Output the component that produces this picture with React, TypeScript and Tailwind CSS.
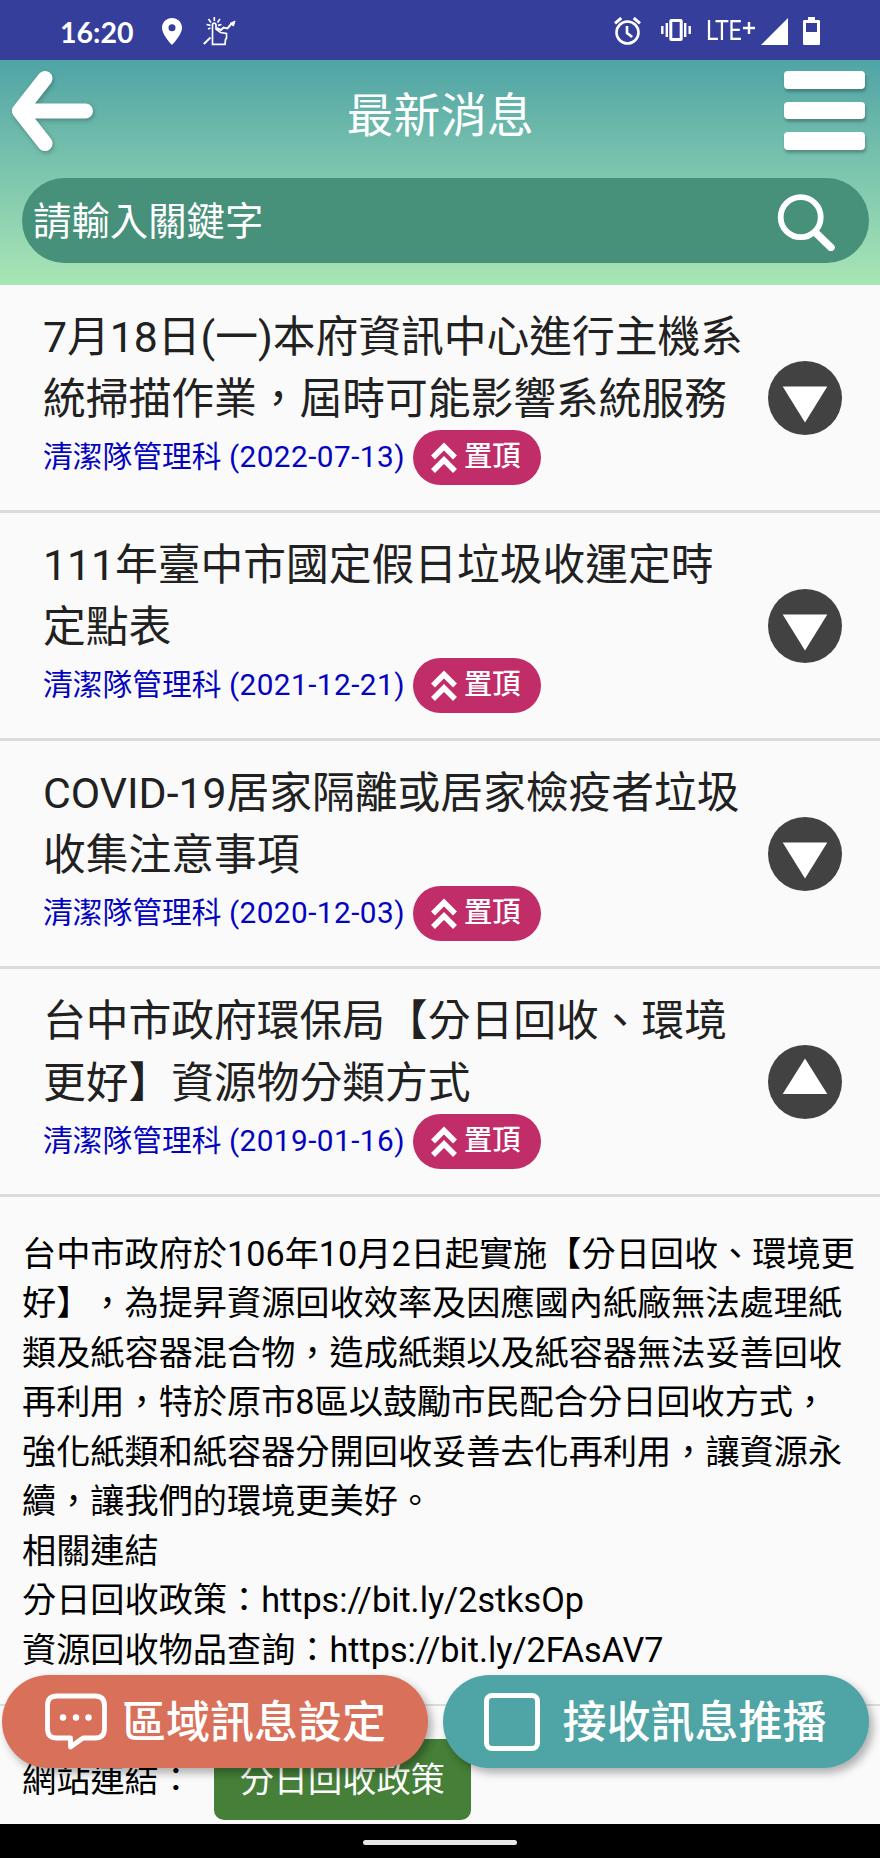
import type { ReactNode } from 'react';

interface NewsItem {
	id: number;
	title: string[];
	unit: string;
	date: string;
	open: boolean;
}

const NEWS: NewsItem[] = [
	{
		id: 1,
		title: ['7月18日(一)本府資訊中心進行主機系', '統掃描作業，屆時可能影響系統服務'],
		unit: '清潔隊管理科',
		date: '2022-07-13',
		open: false,
	},
	{
		id: 2,
		title: ['111年臺中市國定假日垃圾收運定時', '定點表'],
		unit: '清潔隊管理科',
		date: '2021-12-21',
		open: false,
	},
	{
		id: 3,
		title: ['COVID-19居家隔離或居家檢疫者垃圾', '收集注意事項'],
		unit: '清潔隊管理科',
		date: '2020-12-03',
		open: false,
	},
	{
		id: 4,
		title: ['台中市政府環保局【分日回收、環境', '更好】資源物分類方式'],
		unit: '清潔隊管理科',
		date: '2019-01-16',
		open: true,
	},
];

const BODY = [
	'台中市政府於106年10月2日起實施【分日回收、環境更',
	'好】，為提昇資源回收效率及因應國內紙廠無法處理紙',
	'類及紙容器混合物，造成紙類以及紙容器無法妥善回收',
	'再利用，特於原市8區以鼓勵市民配合分日回收方式，',
	'強化紙類和紙容器分開回收妥善去化再利用，讓資源永',
	'續，讓我們的環境更美好。',
	'相關連結',
	'分日回收政策：https://bit.ly/2stksOp',
	'資源回收物品查詢：https://bit.ly/2FAsAV7',
];


function StatusBar() {
	return (
		<div className="flex h-[60px] shrink-0 items-center bg-[#353e9a] pr-[60px] pl-[60px] text-white">
			<span className="mt-[5px] w-[102px] font-[Lato,sans-serif] text-[28.500px] leading-none font-bold">16:20</span>

			{/* Location pin */}
			<svg className="mt-0.5 h-[27px] w-5" viewBox="0 0 20 27" fill="currentColor">
				<path fillRule="evenodd" d="M10 0C4.400 0 0 4.300 0 9.800 0 17 10 27 10 27s10-10 10-17.200C20 4.300 15.600 0 10 0Zm0 6.300a3.500 3.500 0 1 1 0 7 3.500 3.500 0 0 1 0-7Z" />
			</svg>

			{/* Tapping hand with trend line */}
			<svg className="mt-0.5 ml-[21px] h-[29px] w-[33px]" viewBox="0 0 33 29" fill="none" stroke="currentColor" strokeWidth="1.700">
				<path d="M9.500 20v7.300H22l.5-5 1-1v-4.800l-6-1L13 12V8c0-2.500-3.500-2.500-3.500 0v14" />
				<path d="M.8 27 7.500 20.500M13.500 11l4.500 2 2.500-2.500 4 1L29 6" strokeWidth="2" />
				<path d="M27 6.500 32 4l-1.500 5Z" fill="currentColor" strokeWidth="1" />
				<path d="M11.300 0v4M5.500 2l2.500 3.500M17 2l-2.500 3.500M3.500 7.500l4 .8M18.500 7.500l-3.500.8M5 12l2.500-1" />
			</svg>

			{/* Alarm clock */}
			<svg className="mt-0.5 ml-auto h-[28px] w-[27px]" viewBox="0 0 27 28" fill="none" stroke="currentColor" strokeWidth="2.600">
				<circle cx="13.500" cy="15.500" r="11" />
				<path d="M13 9v7l5.200 4" />
				<path d="M1 6.300 7.300 1M26 6.300 19.700 1" strokeWidth="3" />
			</svg>

			{/* Vibrate */}
			<svg className="ml-5 h-[22px] w-[30px]" viewBox="0 0 30 22" fill="none" stroke="currentColor" strokeWidth="3">
				<rect x="9.800" y="1.500" width="10.400" height="19" rx="0.500" />
				<path d="M5.800 4v14M24.200 4v14M1.300 7v8M28.700 7v8" strokeWidth="2.400" />
			</svg>

			<span className="ml-[15px] flex w-[54px] items-center font-[Roboto,sans-serif]">
				<span className="mt-[3px] w-[36px] origin-left scale-x-[0.86] text-[27px] leading-none tracking-[-0.5px]">LTE</span>
				<svg className="mb-1 ml-px h-3 w-3" viewBox="0 0 12 12" stroke="currentColor" strokeWidth="2.400">
					<path d="M6 0v12M0 6h12" />
				</svg>
			</span>

			{/* Signal + battery */}
			<svg className="mt-0.5 ml-px h-[27px] w-[27px]" viewBox="0 0 27 27" fill="currentColor">
				<path d="M27 0v27H0Z" />
			</svg>
			<svg className="mt-0.5 ml-[15px] h-[28px] w-[17px]" viewBox="0 0 17 28" fill="currentColor">
				<path fillRule="evenodd" d="M5 0h7v3h3.500c1 0 1.500.5 1.500 1.500v22c0 1-.5 1.500-1.500 1.500h-14C.5 28 0 27.500 0 26.500v-22C0 3.500.5 3 1.500 3H5V0ZM3 6v9h11V6H3Z" />
			</svg>
		</div>
	);
}


function Header() {
	return (
		<header className="h-[225px] shrink-0 bg-linear-to-b from-[#4fa4a5] to-[#a9e6b5] text-white">
			<div className="flex h-[118px] items-start justify-between pt-[11px] pr-[14.500px] pl-[10px]">
				<svg
					className="h-[84px] w-[86px] drop-shadow-[1px_2px_2px_rgba(0,0,0,0.25)]"
					viewBox="0 0 86 84"
					fill="none"
					stroke="currentColor"
					strokeWidth="15"
					strokeLinecap="round"
					strokeLinejoin="round">
					<path d="M35 7.500 9.500 40 35 72.500M14 40h61.500" />
				</svg>
				<h1 className="pt-[7px] text-[46.700px] leading-[76px]">最新消息</h1>
				<div className="flex flex-col gap-[13px]">
					<div className="h-[17.500px] w-[81px] rounded-[4px] bg-white shadow-[1px_3px_3px_rgba(0,0,0,0.25)]" />
					<div className="h-[17.500px] w-[81px] rounded-[4px] bg-white shadow-[1px_3px_3px_rgba(0,0,0,0.25)]" />
					<div className="h-[17.500px] w-[81px] rounded-[4px] bg-white shadow-[1px_3px_3px_rgba(0,0,0,0.25)]" />
				</div>
			</div>
			<div className="mr-[11px] ml-[22px] flex h-[85px] items-center justify-between rounded-full bg-[#47917a] pr-[33px] pl-[11px]">
				<span className="pt-[2px] text-[38.400px] leading-[60px]">請輸入關鍵字</span>
				<svg className="mt-0.5 mr-px h-[58px] w-[58px]" viewBox="0 0 58 58" fill="none" stroke="currentColor" strokeLinecap="round">
					<circle cx="23.700" cy="24.200" r="20" strokeWidth="5.800" />
					<path d="M39 40 54 54.500" strokeWidth="7.500" />
				</svg>
			</div>
		</header>
	);
}


function PinnedBadge() {
	return (
		<span className="flex h-[54.500px] w-[128px] items-center rounded-full bg-[#c12d68] pl-[18px] text-white">
			<svg className="h-[31px] w-[26px]" viewBox="0 0 26 31" fill="none" stroke="currentColor" strokeWidth="5.500">
				<path d="M2 15.500 13 4.500l11 11M2 29 13 18l11 11" />
			</svg>
			<span className="ml-[7px] text-[28.300px] leading-10 font-medium">置頂</span>
		</span>
	);
}


// Round toggle: triangle points down when collapsed, up when expanded
function ToggleIcon({ open }: { open: boolean }) {
	return (
		<svg className="h-[74px] w-[74px] shrink-0" viewBox="0 0 74 74">
			<circle cx="37" cy="37" r="37" fill="#424242" />
			<path d={open ? 'M37 13.500 59.300 49H14.700Z' : 'M14.700 25.500h44.600L37 61.500Z'} fill="#fff" />
		</svg>
	);
}


function NewsRow({ item }: { item: NewsItem }) {
	return (
		<div className="flex h-[228px] shrink-0 items-center justify-between border-b-[3px] border-[#dcdcdc] pr-[38px] pl-[43px]">
			<div className="h-[181px]">
				<h2 className="text-[42.750px] leading-[61.500px] text-[#212121]">
					{item.title.map((line) => (
						<span key={line} className="block whitespace-nowrap">{line}</span>
					))}
				</h2>
				<div className="flex items-center gap-2">
					<span className="text-[29.750px] leading-[54px] whitespace-nowrap text-[#0404c0]">
						{item.unit} <span className="tracking-[0.440px]">({item.date})</span>
					</span>
					<PinnedBadge />
				</div>
			</div>
			<ToggleIcon open={item.open} />
		</div>
	);
}


function FloatingButton({ className, children }: { className: string; children: ReactNode }) {
	return (
		<button
			className={`flex h-[93px] w-[426px] items-center rounded-full text-[44px] leading-none text-white shadow-[4px_5px_8px_rgba(0,0,0,0.3)] ${className}`}>
			{children}
		</button>
	);
}


export default function App() {
	return (
		<div
			lang="zh-Hant-TW"
			className="relative flex h-[1858px] w-[880px] flex-col overflow-hidden bg-[#fafafa] font-[Roboto,'Noto_Sans_CJK_TC',sans-serif] [text-spacing-trim:space-all]">
			<StatusBar />
			<Header />

			<main className="flex flex-1 flex-col overflow-hidden">
				{NEWS.map((item) => (
					<NewsRow key={item.id} item={item} />
				))}

				<article className="h-[509px] shrink-0 border-b-2 border-[#dcdcdc] pt-[32.500px] pl-[22px] text-[34.180px] leading-[49.550px] text-black">
					{BODY.map((line) => (
						<p key={line} className="whitespace-nowrap">{line}</p>
					))}
				</article>

				<div className="mt-[33px] flex shrink-0 items-center pl-[22px] text-[34.200px] leading-[49.600px]">
					<span className="w-[192px] pt-[3px]">網站連結：</span>
					<a className="flex h-[80.500px] w-[256.500px] items-center justify-center rounded-[10px] bg-[#457f38] pt-[3px] text-white">分日回收政策</a>
				</div>
			</main>

			{/* Actions floating over the list */}
			<div className="absolute top-[1675px] left-[2px] flex gap-[14.500px]">
				<FloatingButton className="bg-[#d9705a] pl-[43px]">
					<svg className="mr-[15px] h-[57px] w-[62px]" viewBox="0 0 62 57" fill="none" stroke="currentColor" strokeWidth="4.800" strokeLinejoin="round">
						<path d="M12 3h38q9.500 0 9.500 9.500v23q0 9.500-9.500 9.500H38L25.500 54V45H12q-9.500 0-9.500-9.500v-23Q2.500 3 12 3Z" />
						<g fill="currentColor" stroke="none">
							<circle cx="18" cy="24.500" r="3.200" />
							<circle cx="31" cy="24.500" r="3.200" />
							<circle cx="43.500" cy="24.500" r="3.200" />
						</g>
					</svg>
					<span className="pt-0.5 font-medium">區域訊息設定</span>
				</FloatingButton>
				<FloatingButton className="bg-[#4fa4a5] pl-[41px]">
					<span className="mr-[23px] h-[58px] w-[56px] rounded-[8px] border-5 border-white" />
					<span className="pt-0.5 font-medium">接收訊息推播</span>
				</FloatingButton>
			</div>

			{/* Gesture navigation bar */}
			<div className="flex h-[34px] shrink-0 items-center justify-center bg-black pt-[3px]">
				<div className="h-[5px] w-[154px] rounded-full bg-[#e8e8e8]" />
			</div>
		</div>
	);
}
